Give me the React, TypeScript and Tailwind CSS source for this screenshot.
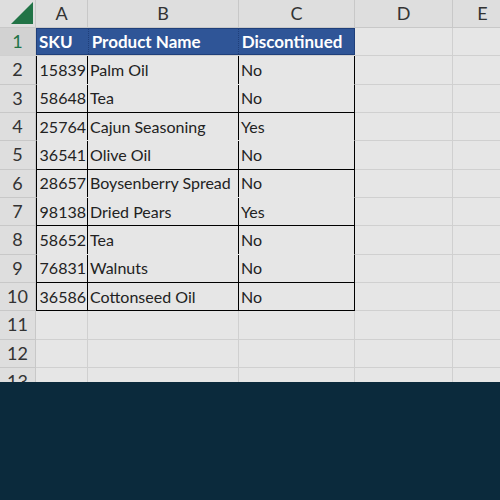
const rows: [string, string, string][] = [
  ["15839", "Palm Oil", "No"],
  ["58648", "Tea", "No"],
  ["25764", "Cajun Seasoning", "Yes"],
  ["36541", "Olive Oil", "No"],
  ["28657", "Boysenberry Spread", "No"],
  ["98138", "Dried Pears", "Yes"],
  ["58652", "Tea", "No"],
  ["76831", "Walnuts", "No"],
  ["36586", "Cottonseed Oil", "No"],
];

const cols = ["w-[36px]", "w-[52px]", "w-[151px]", "w-[116px]", "w-[98px]", "w-[60px]"];

export default function App() {
  return (
    <div className="w-[500px] h-[500px] overflow-hidden bg-[#e6e6e6] text-[16px] text-[#222]" style={{ fontFamily: "Lato, 'Open Sans', sans-serif" }}>
      <div className="h-[382px] overflow-hidden">
        <div className="flex h-[28px] bg-[#dedede] border-b border-[#c8c8c8] text-[18px] text-[#333]">
          <div className={`${cols[0]} shrink-0 relative border-r border-[#c8c8c8]`}>
            <svg className="absolute right-[2px] bottom-[3px]" width="24" height="22"><polygon points="24,0 24,22 2,22" fill="#217346" /></svg>
          </div>
          {["A", "B", "C", "D", "E"].map((c, i) => (
            <div key={c} className={`${cols[i + 1]} shrink-0 flex items-center justify-center border-r border-[#c8c8c8]`}>{c}</div>
          ))}
        </div>
        <div className="flex h-[28.3px] border-b border-[#d0d0d0]">
          <div className={`${cols[0]} shrink-0 bg-[#d2d2d2] text-[#217346] text-[18px] flex items-center justify-center border-r border-[#c8c8c8]`}>1</div>
          <div className="w-[319px] shrink-0 flex bg-[#2f5597] text-white font-bold text-[17px] border border-[#1f3f7a]">
            <div className="w-[52px] px-[2px] flex items-center border-r border-dotted border-[#1f3f7a]">SKU</div>
            <div className="w-[151px] px-[3px] flex items-center border-r border-dotted border-[#1f3f7a]">Product Name</div>
            <div className="w-[116px] px-[3px] flex items-center">Discontinued</div>
          </div>
          <div className="w-[98px] shrink-0 border-r border-[#d0d0d0]" />
        </div>
        {rows.map((r, i) => {
          const groupEnd = i % 2 === 1 || i === rows.length - 1;
          return (
            <div key={i} className="flex h-[28.33px]">
              <div className={`${cols[0]} shrink-0 bg-[#dedede] text-[18px] text-[#333] flex items-center justify-center border-r border-b border-[#c8c8c8]`}>{i + 2}</div>
              <div className={`w-[319px] shrink-0 flex border-x border-black ${groupEnd ? "border-b border-b-black" : "border-b border-b-transparent"}`}>
                <div className="w-[51px] pr-[1px] flex items-center justify-end border-r border-black">{r[0]}</div>
                <div className="w-[151px] px-[2px] flex items-center border-r border-black whitespace-nowrap">{r[1]}</div>
                <div className="flex-1 px-[2px] flex items-center">{r[2]}</div>
              </div>
              <div className="w-[98px] shrink-0 border-r border-b border-[#d0d0d0]" />
              <div className="flex-1 border-b border-[#d0d0d0]" />
            </div>
          );
        })}
        {[11, 12, 13].map((n) => (
          <div key={n} className="flex h-[28.33px]">
            <div className={`${cols[0]} shrink-0 bg-[#dedede] text-[18px] text-[#333] flex items-center justify-center border-r border-b border-[#c8c8c8]`}>{n}</div>
            <div className="w-[52px] shrink-0 border-r border-b border-[#d0d0d0]" />
            <div className="w-[151px] shrink-0 border-r border-b border-[#d0d0d0]" />
            <div className="w-[116px] shrink-0 border-r border-b border-[#d0d0d0]" />
            <div className="w-[98px] shrink-0 border-r border-b border-[#d0d0d0]" />
            <div className="flex-1 border-b border-[#d0d0d0]" />
          </div>
        ))}
      </div>
      <div className="h-[118px] bg-[#0b2a3c]" />
    </div>
  );
}
